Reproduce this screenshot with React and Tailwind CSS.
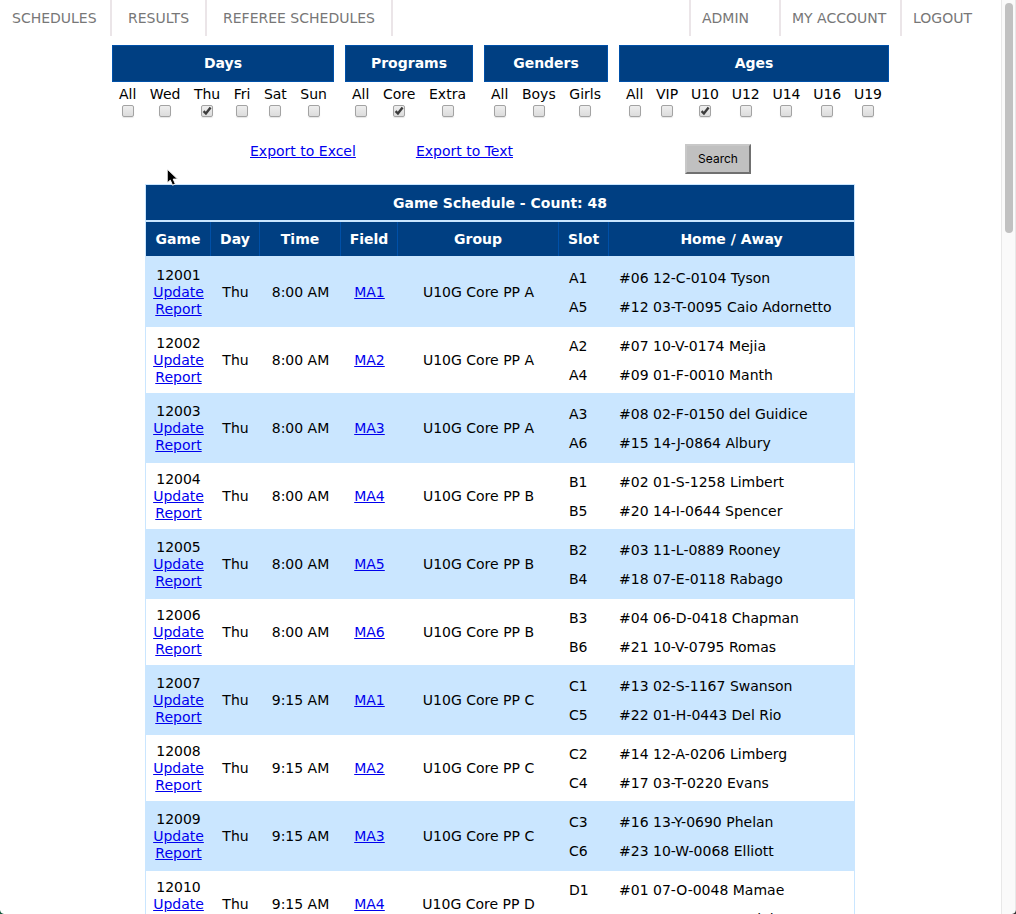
const filters = [
  { title: 'Days', width: 'w-[222px]', options: ['All', 'Wed', 'Thu', 'Fri', 'Sat', 'Sun'], checked: 'Thu' },
  { title: 'Programs', width: 'w-32', options: ['All', 'Core', 'Extra'], checked: 'Core' },
  { title: 'Genders', width: 'w-[124px]', options: ['All', 'Boys', 'Girls'], checked: null },
  { title: 'Ages', width: 'w-[270px]', options: ['All', 'VIP', 'U10', 'U12', 'U14', 'U16', 'U19'], checked: 'U10' },
];

const games = [
  ['12001', '8:00 AM', 'MA1', 'U10G Core PP A', 'A1', '#06 12-C-0104 Tyson', 'A5', '#12 03-T-0095 Caio Adornetto'],
  ['12002', '8:00 AM', 'MA2', 'U10G Core PP A', 'A2', '#07 10-V-0174 Mejia', 'A4', '#09 01-F-0010 Manth'],
  ['12003', '8:00 AM', 'MA3', 'U10G Core PP A', 'A3', '#08 02-F-0150 del Guidice', 'A6', '#15 14-J-0864 Albury'],
  ['12004', '8:00 AM', 'MA4', 'U10G Core PP B', 'B1', '#02 01-S-1258 Limbert', 'B5', '#20 14-I-0644 Spencer'],
  ['12005', '8:00 AM', 'MA5', 'U10G Core PP B', 'B2', '#03 11-L-0889 Rooney', 'B4', '#18 07-E-0118 Rabago'],
  ['12006', '8:00 AM', 'MA6', 'U10G Core PP B', 'B3', '#04 06-D-0418 Chapman', 'B6', '#21 10-V-0795 Romas'],
  ['12007', '9:15 AM', 'MA1', 'U10G Core PP C', 'C1', '#13 02-S-1167 Swanson', 'C5', '#22 01-H-0443 Del Rio'],
  ['12008', '9:15 AM', 'MA2', 'U10G Core PP C', 'C2', '#14 12-A-0206 Limberg', 'C4', '#17 03-T-0220 Evans'],
  ['12009', '9:15 AM', 'MA3', 'U10G Core PP C', 'C3', '#16 13-Y-0690 Phelan', 'C6', '#23 10-W-0068 Elliott'],
  ['12010', '9:15 AM', 'MA4', 'U10G Core PP D', 'D1', '#01 07-O-0048 Mamae', 'D5', '#10 07-P-0104 Daniel'],
];

function FilterGroup({ title, width, options, checked }) {
  return (
    <fieldset className={`${width} min-w-0`}>
      <legend className="h-[37px] w-full border border-[#0050a8] bg-[#003f82] text-center leading-[34px] font-bold text-white">
        {title}
      </legend>
      <div className="flex justify-between px-[7px] pt-1">
        {options.map((o) => (
          <label key={o} className="flex flex-col items-center leading-4">
            {o}
            <input
              type="checkbox"
              defaultChecked={o === checked}
              className="peer mt-[3px] size-3 appearance-none rounded-[2px] border border-[#a3a3a3] bg-linear-to-b from-[#eeeeee] to-[#dcdcdc] shadow-[0_1px_1px_#0000001a]"
            />
            <svg viewBox="0 0 12 12" className="pointer-events-none relative -mt-3 hidden size-3 peer-checked:block" fill="none" stroke="#3c3c3c" strokeWidth="2.4">
              <path d="M2.6 6.2 4.9 8.5 9.6 2.4" />
            </svg>
          </label>
        ))}
      </div>
    </fieldset>
  );
}

function Link({ children }) {
  return <a href="#" className="text-[#0000ee] underline">{children}</a>;
}

const cell = 'h-[68px] border-y border-[#cae6ff] p-0 text-center leading-[17px]';
const teamCell = 'h-[68px] border-y border-[#cae6ff] pt-[2px] pr-0 pb-0 pl-[10px] leading-[29px] whitespace-nowrap';

export default function App() {
  return (
    <div className="relative flex h-screen overflow-hidden bg-white font-['DejaVu_Sans',sans-serif] text-sm text-black">
      <div className="min-w-0 flex-1">
        <nav className="flex h-9 text-[#777777]">
          <a href="#" className="flex w-28 items-center border-r-2 border-[#ebe5e8] pl-3">SCHEDULES</a>
          <a href="#" className="flex w-[95px] items-center border-r-2 border-[#ebe5e8] pl-4">RESULTS</a>
          <a href="#" className="flex w-[186px] items-center border-r-2 border-[#ebe5e8] pl-4">REFEREE SCHEDULES</a>
          <a href="#" className="ml-auto flex w-[90px] items-center border-l-2 border-[#ebe5e8] pl-[11px]">ADMIN</a>
          <a href="#" className="flex w-[121px] items-center border-l-2 border-[#ebe5e8] pl-[11px]">MY ACCOUNT</a>
          <a href="#" className="flex w-[101px] items-center border-l-2 border-[#ebe5e8] pl-[11px]">LOGOUT</a>
        </nav>

        <form onSubmit={(e) => e.preventDefault()}>
          <div className="mt-[9px] flex justify-center gap-[11px]">
            {filters.map((f) => <FilterGroup key={f.title} {...f} />)}
          </div>
          <div className="mt-[27px] flex justify-center pr-px">
            <div className="flex w-[710px] items-start pr-[104px] pl-[105px]">
              <div className="flex flex-1 gap-[60px] leading-[14px]">
                <Link>Export to Excel</Link>
                <Link>Export to Text</Link>
              </div>
              <button type="submit" className="h-[30px] w-[66px] border-2 border-t-[#c8c8c8] border-r-[#707070] border-b-[#707070] border-l-[#c8c8c8] bg-[#c0c0c0] font-['Inter',sans-serif] text-xs">
                Search
              </button>
            </div>
          </div>
        </form>

        <div className="mt-[10px] flex justify-center pr-px">
          <table className="w-[710px] table-fixed border-separate border-spacing-0 border border-[#cae6ff]">
            <colgroup>
              <col className="w-[65px]" />
              <col className="w-[49px]" />
              <col className="w-[81px]" />
              <col className="w-[57px]" />
              <col className="w-[161px]" />
              <col className="w-[50px]" />
              <col />
            </colgroup>
            <thead className="bg-[#003f82] text-white">
              <tr>
                <th colSpan={7} className="h-[37px] border-b-2 border-[#cae6ff] p-0 text-center font-bold">Game Schedule - Count: 48</th>
              </tr>
              <tr>
                {['Game', 'Day', 'Time', 'Field', 'Group', 'Slot', 'Home / Away'].map((h) => (
                  <th key={h} className="group border-b-2 border-[#cae6ff] p-0 font-bold">
                    <div className="flex h-[34px] items-center justify-center border-r border-[#0050a8] group-last:border-r-0">{h}</div>
                  </th>
                ))}
              </tr>
            </thead>
            <tbody>
              {games.map(([id, time, field, group, slot1, home, slot2, away]) => (
                <tr key={id} className="odd:bg-[#cae6ff]">
                  <td className={cell}>
                    {id}<br /><Link>Update</Link><br /><Link>Report</Link>
                  </td>
                  <td className={cell}>Thu</td>
                  <td className={cell}>{time}</td>
                  <td className={cell}><Link>{field}</Link></td>
                  <td className={cell}>{group}</td>
                  <td className={teamCell}>{slot1}<br />{slot2}</td>
                  <td className={teamCell}>{home}<br />{away}</td>
                </tr>
              ))}
            </tbody>
          </table>
        </div>
      </div>

      <div className="w-[15px] shrink-0 border-x border-[#e8e8e8] bg-[#fafafa] px-[3px] pt-[3px]">
        <div className="h-[230px] w-2 rounded-full bg-[#c1c1c1]" />
      </div>

      <svg className="absolute top-[168px] left-[166px] h-[19px] w-[13px]" viewBox="0 0 13 19">
        <path d="M1.2 1v14l3.1-2.8 2.2 5 2.9-1.2-2.2-4.9h4.4z" fill="#000" stroke="#fff" strokeWidth="1" />
      </svg>
      <svg className="absolute bottom-0 left-0 size-1" viewBox="0 0 4 4"><path d="M0 0Q.5 3.5 4 4H0z" fill="#12583c" /></svg>
      <svg className="absolute right-0 bottom-0 size-1" viewBox="0 0 4 4"><path d="M4 0Q3.5 3.5 0 4h4z" fill="#333" /></svg>
    </div>
  );
}
